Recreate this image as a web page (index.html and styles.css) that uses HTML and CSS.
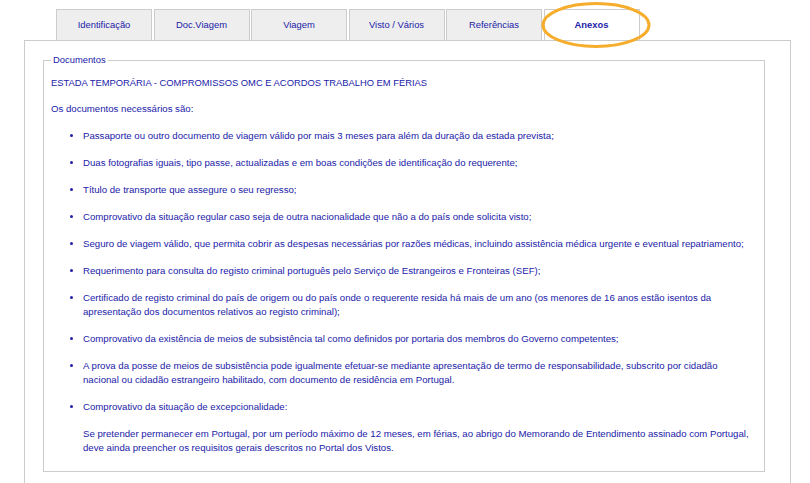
FILE: index.html
```html
<!DOCTYPE html>
<html lang="pt">
<head>
<meta charset="utf-8">
<title>Anexos</title>
<link rel="stylesheet" href="styles.css">
</head>
<body>
<div class="page">
  <div class="tabs">
    <div class="tab">Identificação</div>
    <div class="tab">Doc.Viagem</div>
    <div class="tab">Viagem</div>
    <div class="tab">Visto / Vários</div>
    <div class="tab">Referências</div>
    <div class="tab active">Anexos</div>
    <svg class="highlight" width="112" height="48" viewBox="0 0 112 48"><ellipse cx="55" cy="23" rx="53" ry="21.5" fill="none" stroke="#f7ad2c" stroke-width="3"/></svg>
  </div>
  <div class="panel">
    <fieldset class="docs">
      <legend>Documentos</legend>
      <p class="title">ESTADA TEMPORÁRIA - COMPROMISSOS OMC E ACORDOS TRABALHO EM FÉRIAS</p>
      <p class="intro">Os documentos necessários são:</p>
      <ul class="list">
        <li>Passaporte ou outro documento de viagem válido por mais 3 meses para além da duração da estada prevista;</li>
        <li>Duas fotografias iguais, tipo passe, actualizadas e em boas condições de identificação do requerente;</li>
        <li>Título de transporte que assegure o seu regresso;</li>
        <li>Comprovativo da situação regular caso seja de outra nacionalidade que não a do país onde solicita visto;</li>
        <li>Seguro de viagem válido, que permita cobrir as despesas necessárias por razões médicas, incluindo assistência médica urgente e eventual repatriamento;</li>
        <li>Requerimento para consulta do registo criminal português pelo Serviço de Estrangeiros e Fronteiras (SEF);</li>
        <li>Certificado de registo criminal do país de origem ou do país onde o requerente resida há mais de um ano (os menores de 16 anos estão isentos da apresentação dos documentos relativos ao registo criminal);</li>
        <li>Comprovativo da existência de meios de subsistência tal como definidos por portaria dos membros do Governo competentes;</li>
        <li>A prova da posse de meios de subsistência pode igualmente efetuar-se mediante apresentação de termo de responsabilidade, subscrito por cidadão nacional ou cidadão estrangeiro habilitado, com documento de residência em Portugal.</li>
        <li>Comprovativo da situação de excepcionalidade:
          <p class="note">Se pretender permanecer em Portugal, por um período máximo de 12 meses, em férias, ao abrigo do Memorando de Entendimento assinado com Portugal, deve ainda preencher os requisitos gerais descritos no Portal dos Vistos.</p>
        </li>
      </ul>
    </fieldset>
  </div>
</div>
</body>
</html>
```
FILE: styles.css
```css
* { box-sizing: border-box; }
html, body { margin: 0; padding: 0; background: #fff; }
body {
  font-family: "Liberation Sans", Arial, Helvetica, sans-serif;
  font-size: 9.65px;
  line-height: 14px;
  color: #2121a8;
}
.page {
  padding: 9px 20px 0 24px;
}
.tabs {
  position: relative;
  display: flex;
  gap: 1.5px;
  margin-left: 32px;
  height: 31px;
  font-size: 9.4px;
}
.tab {
  width: 96px;
  height: 31px;
  border: 1px solid #cccccc;
  border-bottom: none;
  background: #eeeeee;
  display: flex;
  align-items: center;
  justify-content: center;
  padding-bottom: 1px;
}
.tab.active {
  background: #ffffff;
  font-weight: bold;
}
.highlight {
  position: absolute;
  left: 485px;
  top: -7px;
}
.panel {
  width: 767px;
  height: 460px;
  border: 1px solid #cccccc;
  border-bottom: none;
  padding: 12px 0 0 18px;
}
.docs {
  width: 722px;
  margin: 0;
  border: 1px solid #cccccc;
  padding: 9px 7px 16px 7px;
}
.docs legend {
  padding: 0 2px;
  line-height: 14px;
  font-size: 9.4px;
}
.title { margin: 0; font-size: 9.4px; }
.intro { margin: 12px 0 0; }
.list {
  margin: 13px 4px 0 0;
  padding: 0 0 0 32px;
  list-style: disc;
}
.list li { margin: 0 0 13px; }
.list li:last-child { margin-bottom: 0; }
.note { margin: 13px 0 0; }
```
